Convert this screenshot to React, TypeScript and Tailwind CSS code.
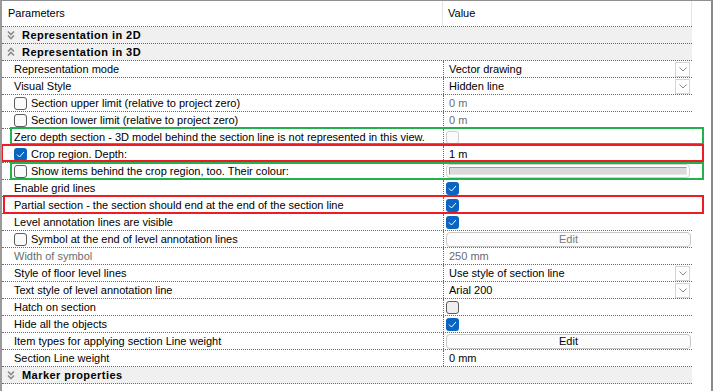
import React from "react";

type Value =
  | { kind: "text"; text: string; muted?: boolean }
  | { kind: "select"; text: string }
  | { kind: "check"; checked: boolean; disabled?: boolean; grey?: boolean }
  | { kind: "colour" }
  | { kind: "edit"; disabled?: boolean }
  | { kind: "none" };

type Row =
  | { type: "group"; label: string; open: boolean }
  | { type: "item"; label: string; box?: boolean; boxChecked?: boolean; muted?: boolean; value: Value };

const rows: Row[] = [
  { type: "group", label: "Representation in 2D", open: false },
  { type: "group", label: "Representation in 3D", open: true },
  { type: "item", label: "Representation mode", value: { kind: "select", text: "Vector drawing" } },
  { type: "item", label: "Visual Style", value: { kind: "select", text: "Hidden line" } },
  { type: "item", label: "Section upper limit (relative to project zero)", box: true, value: { kind: "text", text: "0 m", muted: true } },
  { type: "item", label: "Section lower limit (relative to project zero)", box: true, value: { kind: "text", text: "0 m", muted: true } },
  { type: "item", label: "Zero depth section - 3D model behind the section line is not represented in this view.", value: { kind: "check", checked: false, disabled: true } },
  { type: "item", label: "Crop region. Depth:", box: true, boxChecked: true, value: { kind: "text", text: "1 m" } },
  { type: "item", label: "Show items behind the crop region, too. Their colour:", box: true, value: { kind: "colour" } },
  { type: "item", label: "Enable grid lines", value: { kind: "check", checked: true } },
  { type: "item", label: "Partial section - the section should end at the end of the section line", value: { kind: "check", checked: true } },
  { type: "item", label: "Level annotation lines are visible", value: { kind: "check", checked: true } },
  { type: "item", label: "Symbol at the end of level annotation lines", box: true, value: { kind: "edit", disabled: true } },
  { type: "item", label: "Width of symbol", muted: true, value: { kind: "text", text: "250 mm", muted: true } },
  { type: "item", label: "Style of floor level lines", value: { kind: "select", text: "Use style of section line" } },
  { type: "item", label: "Text style of level annotation line", value: { kind: "select", text: "Arial 200" } },
  { type: "item", label: "Hatch on section", value: { kind: "check", checked: false, grey: true } },
  { type: "item", label: "Hide all the objects", value: { kind: "check", checked: true } },
  { type: "item", label: "Item types for applying section Line weight", value: { kind: "edit" } },
  { type: "item", label: "Section Line weight", value: { kind: "text", text: "0 mm" } },
  { type: "group", label: "Marker properties", open: false },
];

function Chevrons({ open }: { open: boolean }) {
  return (
    <svg width="8" height="10" viewBox="0 0 8 10" className={open ? "rotate-180" : ""}>
      <path d="M1 1.5 L4 4.5 L7 1.5 M1 5.5 L4 8.5 L7 5.5" fill="none" stroke="#8a8a8a" strokeWidth="1.6" />
    </svg>
  );
}

function Box({ checked, disabled, grey }: { checked?: boolean; disabled?: boolean; grey?: boolean }) {
  if (checked) {
    return (
      <div className="w-[13px] h-[13px] rounded-[3px] bg-[#0a64c2] flex items-center justify-center shrink-0">
        <svg width="9" height="7" viewBox="0 0 9 7">
          <path d="M1 3.5 L3.5 6 L8 1" fill="none" stroke="#ffffff" strokeWidth="1" />
        </svg>
      </div>
    );
  }
  return (
    <div
      className={
        "w-[13px] h-[13px] rounded-[3px] border shrink-0 " +
        (disabled ? "border-[#cfcfcf] bg-[#fbfbfb]" : grey ? "border-[#5c5c5c] bg-[#efefef]" : "border-[#5c5c5c] bg-[#fbfbfb]")
      }
    />
  );
}

function ValueCell({ v }: { v: Value }) {
  switch (v.kind) {
    case "text":
      return <span className={"pl-[5px] " + (v.muted ? "text-[#6d6d6d]" : "text-black")}>{v.text}</span>;
    case "select":
      return (
        <div className="flex items-center justify-between w-full pl-[5px] pr-[2px]">
          <span>{v.text}</span>
          <div className="w-[15px] h-[15px] border border-[#d4d4d4] bg-white flex items-center justify-center">
            <svg width="8" height="5" viewBox="0 0 8 5">
              <path d="M0.5 0.5 L4 4 L7.5 0.5" fill="none" stroke="#7a7a7a" strokeWidth="0.9" />
            </svg>
          </div>
        </div>
      );
    case "check":
      return (
        <div className="pl-[2px]">
          <Box checked={v.checked} disabled={v.disabled} grey={v.grey} />
        </div>
      );
    case "colour":
      return (
        <div className="w-full pl-[2px] pr-[2px]">
          <div className="h-[14px] rounded-[4px] border border-[#d2d2d2] bg-white flex items-center px-[2px]">
            <div className="h-[8px] w-full bg-[#dadada] border-t border-l border-[#9a9a9a] border-r border-b border-r-[#e8e8e8] border-b-[#e8e8e8]" />
          </div>
        </div>
      );
    case "edit":
      return (
        <div className="w-full pl-[2px] pr-[1px]">
          <div
            className={
              "h-[15px] rounded-[4px] border border-[#c8c8c8] bg-[#fcfcfc] flex items-center justify-center leading-none " +
              (v.disabled ? "text-[#7a7a7a]" : "text-black")
            }
          >
            Edit
          </div>
        </div>
      );
    default:
      return null;
  }
}

export default function App() {
  return (
    <div className="w-[713px] h-[391px] bg-white border-t border-l-2 border-r-2 border-t-[#8f8f8f] border-l-[#9a9a9a] border-r-[#8a8a8a] overflow-hidden relative font-['Liberation_Sans',Arial,sans-serif] text-[11px] text-black">
      <div className="w-[690px]">
        <div className="h-[26px] flex border-b border-dotted border-[#6a6a6a]">
          <div className="w-[441px] pl-[6px] flex items-center border-r border-[#e4e4e4]">Parameters</div>
          <div className="w-[249px] pl-[5px] flex items-center border-r border-[#e4e4e4]">Value</div>
        </div>
        {rows.map((r, i) =>
          r.type === "group" ? (
            <div key={i} className="h-[17px] flex items-center bg-[#f0f0f0] border-b border-dotted border-[#6a6a6a]">
              <div className="w-[20px] pl-[5px] flex items-center">
                <Chevrons open={r.open} />
              </div>
              <span className="font-bold tracking-[0.45px]">{r.label}</span>
            </div>
          ) : (
            <div key={i} className="h-[17px] flex border-b border-dotted border-[#6a6a6a]">
              <div className={"w-[441px] pl-[12px] flex items-center gap-[4px] whitespace-nowrap overflow-hidden " + (r.muted ? "text-[#6d6d6d]" : "")}>
                {r.box && <Box checked={r.boxChecked} />}
                <span>{r.label}</span>
              </div>
              <div className="w-[249px] flex items-center border-l border-dotted border-[#6a6a6a]">
                <ValueCell v={r.value} />
              </div>
            </div>
          )
        )}
      </div>

      {/* highlight frames drawn over the grid */}
      <div className="absolute left-[8px] top-[126px] w-[694px] h-[18px] border-2 border-[#22b14c]" />
      <div className="absolute left-[-1px] top-[143px] w-[703px] h-[18px] border-2 border-[#ed1c24]" />
      <div className="absolute left-[8px] top-[161px] w-[694px] h-[18px] border-2 border-[#22b14c]" />
      <div className="absolute left-[1px] top-[194px] w-[701px] h-[19px] border-2 border-[#ed1c24]" />
    </div>
  );
}
